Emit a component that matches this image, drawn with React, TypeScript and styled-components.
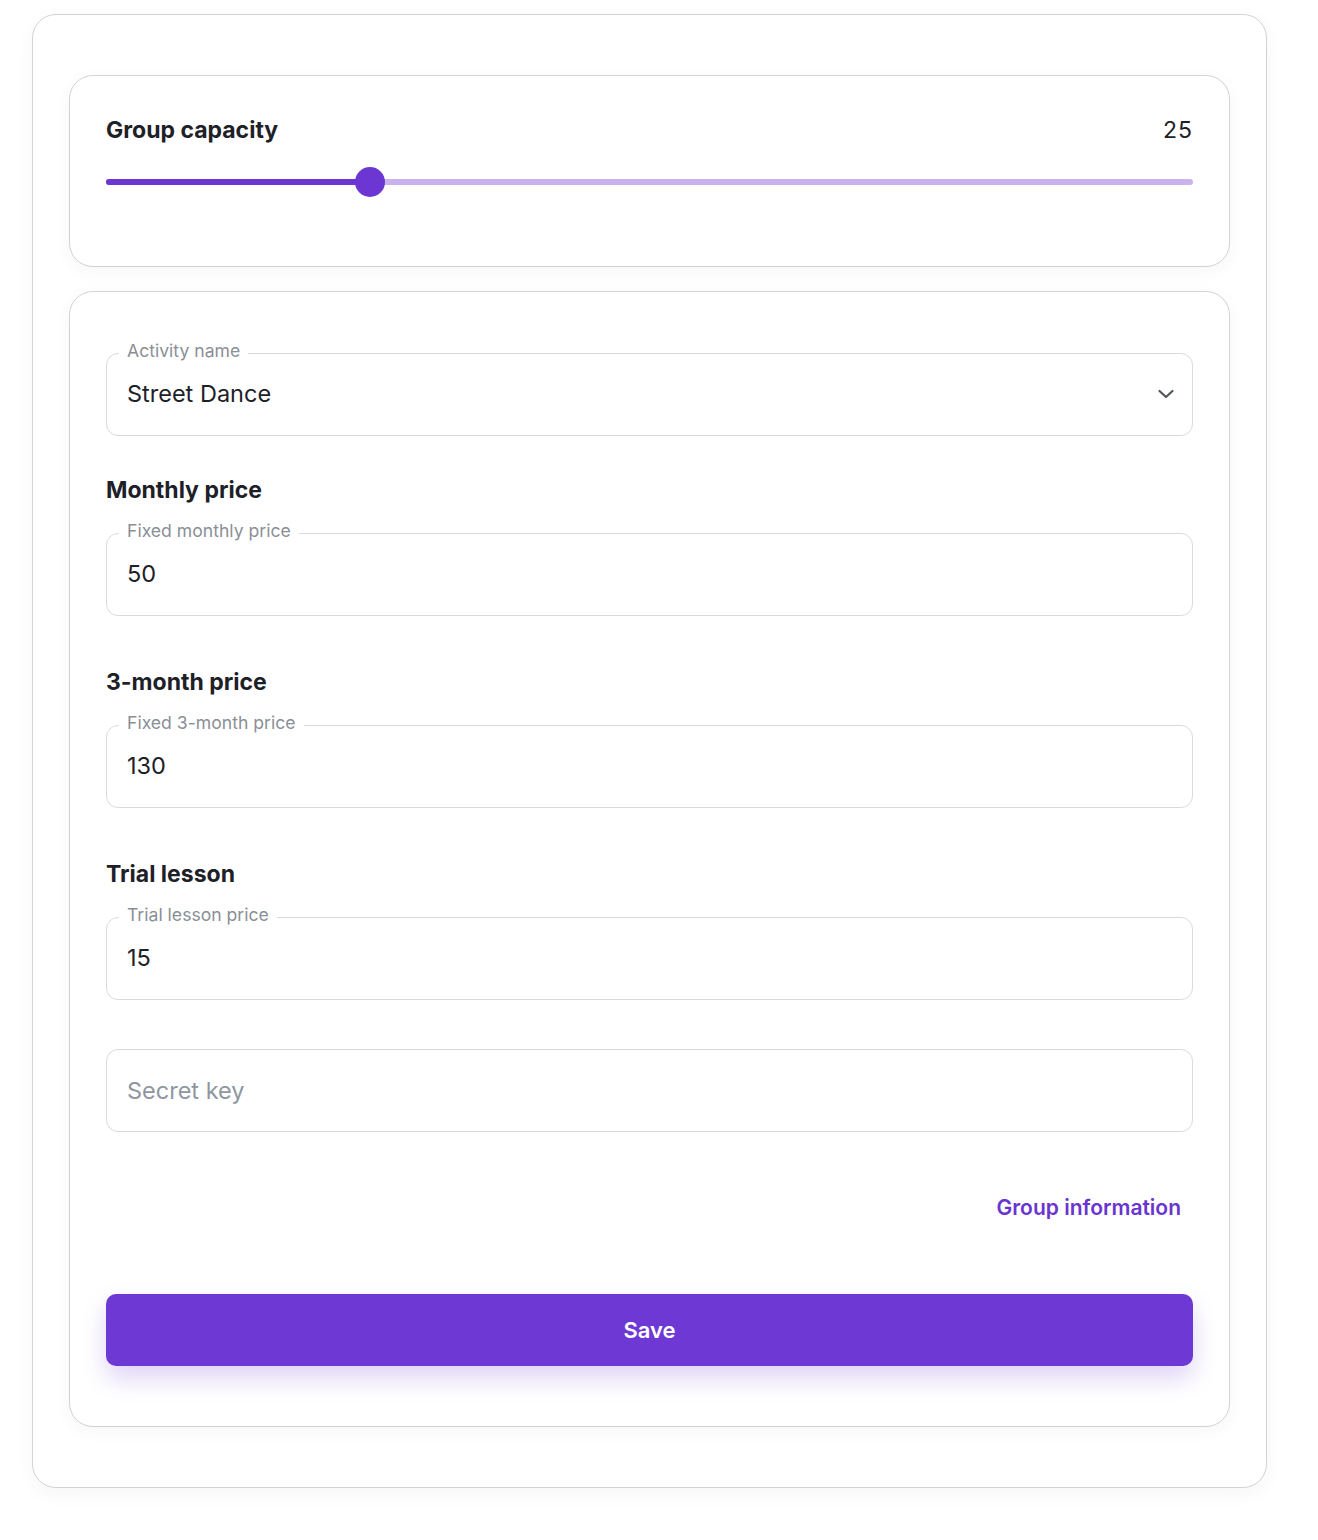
import styled, { createGlobalStyle } from "styled-components";

const GlobalStyle = createGlobalStyle`
  * {
    box-sizing: border-box;
  }
  body {
    margin: 0;
    background: #ffffff;
    font-family: Inter, "Noto Sans", "Liberation Sans", sans-serif;
    color: #1d2127;
  }
`;

const CAPACITY = 25;
const MIN = 1;
const MAX = 100;

const App = () => {
  const percent = ((CAPACITY - MIN) / (MAX - MIN)) * 100;

  return (
    <>
      <GlobalStyle />
      <StyledPage>
        <StyledOuterCard>
          <StyledCapacityCard>
            <StyledHeaderRow>
              <StyledTitle>Group capacity</StyledTitle>
              <StyledValue>{CAPACITY}</StyledValue>
            </StyledHeaderRow>
            <StyledSlider>
              <StyledTrack>
                <StyledFill style={{ width: `${percent}%` }} />
                <StyledThumb style={{ left: `${percent}%` }} />
              </StyledTrack>
            </StyledSlider>
          </StyledCapacityCard>

          <StyledFormCard>
            <StyledField $hasLabel>
              <legend>Activity name</legend>
              <StyledSelectRow>
                <span>Street Dance</span>
                <svg width="18" height="12" viewBox="0 0 18 12" fill="none">
                  <path
                    d="M2.5 3l6.5 6 6.5-6"
                    stroke="#4f555d"
                    strokeWidth="2.2"
                    strokeLinecap="round"
                    strokeLinejoin="round"
                  />
                </svg>
              </StyledSelectRow>
            </StyledField>

            <StyledSection $top={40}>
              <StyledHeading>Monthly price</StyledHeading>
              <StyledField $hasLabel>
                <legend>Fixed monthly price</legend>
                <StyledInput defaultValue="50" />
              </StyledField>
            </StyledSection>

            <StyledSection $top={52}>
              <StyledHeading>3-month price</StyledHeading>
              <StyledField $hasLabel>
                <legend>Fixed 3-month price</legend>
                <StyledInput defaultValue="130" />
              </StyledField>
            </StyledSection>

            <StyledSection $top={52}>
              <StyledHeading>Trial lesson</StyledHeading>
              <StyledField $hasLabel>
                <legend>Trial lesson price</legend>
                <StyledInput defaultValue="15" />
              </StyledField>
            </StyledSection>

            <StyledSection $top={49}>
              <StyledField>
                <StyledInput placeholder="Secret key" />
              </StyledField>
            </StyledSection>

            <StyledLinkRow>
              <a href="#">Group information</a>
            </StyledLinkRow>

            <StyledSaveButton type="button">Save</StyledSaveButton>
          </StyledFormCard>
        </StyledOuterCard>
      </StyledPage>
    </>
  );
};

const StyledPage = styled.div`
  padding: 14px 0 40px 32px;
`;

const StyledOuterCard = styled.div`
  width: 1235px;
  padding: 60px 36px;
  display: flex;
  flex-direction: column;
  gap: 24px;
  border: 1px solid #d3d3d3;
  border-radius: 24px;
  background: #ffffff;
  box-shadow: 0 6px 20px rgba(0, 0, 0, 0.04);
`;

const StyledCard = styled.div`
  border: 1px solid #d3d3d3;
  border-radius: 24px;
  background: #ffffff;
  box-shadow: 0 4px 18px rgba(0, 0, 0, 0.04);
`;

const StyledCapacityCard = styled(StyledCard)`
  padding: 40px 36px 69px;
`;

const StyledHeaderRow = styled.div`
  display: flex;
  align-items: center;
  justify-content: space-between;
  line-height: 28px;
`;

const StyledTitle = styled.h2`
  margin: 0;
  font-size: 23px;
  font-weight: 700;
  color: #1d2127;
`;

const StyledValue = styled.span`
  font-size: 23px;
  letter-spacing: 1px;
  color: #1d2127;
`;

const StyledSlider = styled.div`
  margin-top: 23px;
  height: 30px;
  display: flex;
  align-items: center;
`;

const StyledTrack = styled.div`
  position: relative;
  width: 100%;
  height: 6px;
  border-radius: 3px;
  background: #c9b2ee;
`;

const StyledFill = styled.div`
  height: 100%;
  border-radius: 3px;
  background: #6b36d2;
`;

const StyledThumb = styled.div`
  position: absolute;
  top: 50%;
  width: 30px;
  height: 30px;
  border-radius: 50%;
  background: #6b36d2;
  transform: translate(-50%, -50%);
`;

const StyledFormCard = styled(StyledCard)`
  padding: 50px 36px 60px;
  display: flex;
  flex-direction: column;
`;

const StyledSection = styled.div<{ $top: number }>`
  margin-top: ${(p) => p.$top}px;
  display: flex;
  flex-direction: column;
`;

const StyledHeading = styled.h3`
  margin: 0 0 18px;
  font-size: 23px;
  line-height: 28px;
  font-weight: 700;
  color: #1d2127;
`;

const StyledField = styled.fieldset<{ $hasLabel?: boolean }>`
  margin: 0;
  min-width: 0;
  padding: 0 17px ${(p) => (p.$hasLabel ? "13px" : "0")} 20px;
  border: 1px solid #d8dadd;
  border-radius: 12px;

  legend {
    margin-left: -8px;
    padding: 0 8px 6px;
    font-size: 17.6px;
    line-height: 17px;
    color: #8a8f97;
  }

  input {
    height: ${(p) => (p.$hasLabel ? "57px" : "81px")};
  }
`;

const StyledInput = styled.input`
  display: block;
  width: 100%;
  padding: 0;
  border: none;
  outline: none;
  background: transparent;
  font-family: inherit;
  font-size: 23.5px;
  color: #1d2127;

  &::placeholder {
    color: #8f96a0;
  }
`;

const StyledSelectRow = styled.div`
  height: 57px;
  display: flex;
  align-items: center;
  justify-content: space-between;
  font-size: 23.5px;
  color: #1d2127;
  cursor: pointer;
`;

const StyledLinkRow = styled.div`
  margin-top: 64px;
  display: flex;
  justify-content: flex-end;
  padding-right: 12px;

  a {
    font-size: 21px;
    line-height: 24px;
    font-weight: 600;
    color: #6a34d0;
    text-decoration: none;
  }
`;

const StyledSaveButton = styled.button`
  margin-top: 74px;
  height: 72px;
  width: 100%;
  border: none;
  border-radius: 10px;
  background: #6e38d5;
  color: #ffffff;
  font-family: inherit;
  font-size: 22px;
  font-weight: 600;
  cursor: pointer;
  box-shadow: 0 12px 24px rgba(110, 56, 213, 0.22);
`;

export default App;
